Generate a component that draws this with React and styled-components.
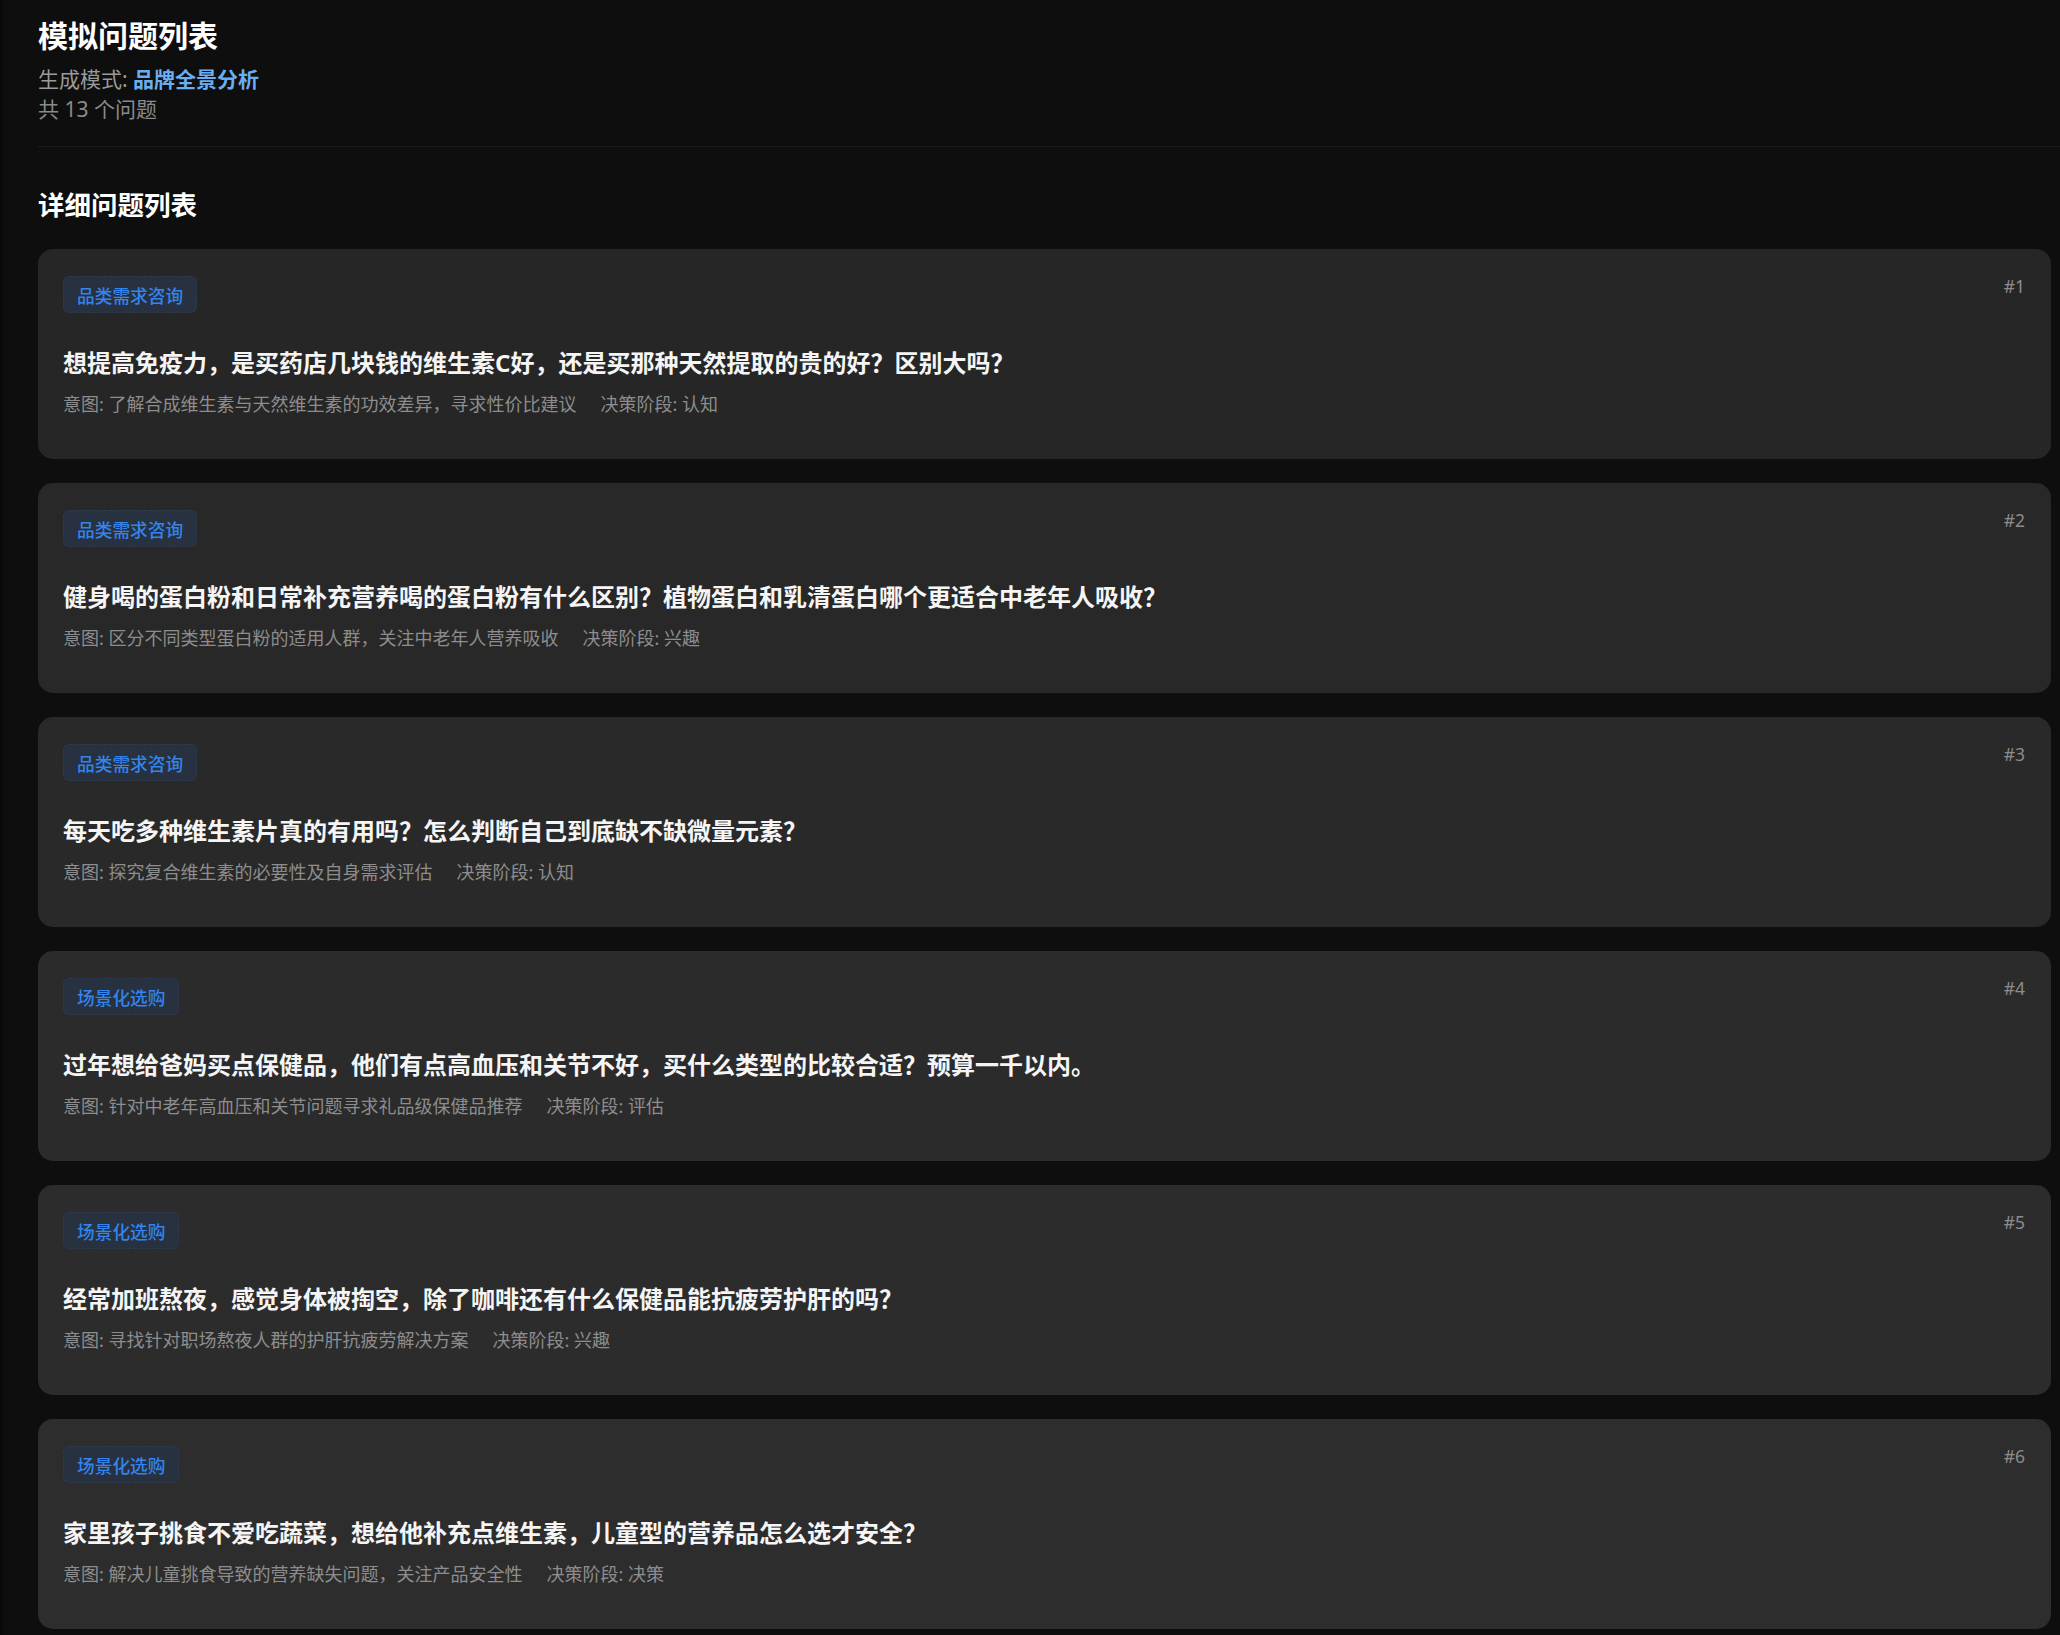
import React from "react";
import styled, { createGlobalStyle } from "styled-components";

const GlobalStyle = createGlobalStyle`
  html, body {
    margin: 0;
    padding: 0;
    background: #0e0e0e;
  }
  body {
    font-family: "Noto Sans", "Noto Sans CJK SC", sans-serif;
    color: #f2f2f2;
    -webkit-font-smoothing: antialiased;
  }
  * { box-sizing: border-box; }
`;

const Page = styled.div`
  min-height: 1635px;
  background: #0e0e0e;
  border-left: 3px solid #090909;
  padding: 0 9px 0 35px;
  overflow: hidden;
`;

const Header = styled.header`
  padding: 16px 0 22px;
  margin-right: -9px;
  border-bottom: 1px solid #1b1b1b;
  display: flex;
  flex-direction: column;
`;

const Title = styled.h1`
  margin: 0 0 9px;
  font-size: 30px;
  line-height: 39px;
  font-weight: 700;
  color: #ffffff;
`;

const Meta = styled.div`
  font-size: 21px;
  line-height: 30px;
  color: ${(p) => (p.$dim ? "#8a8a8a" : "#9a9a9a")};
`;

const Mode = styled.span`
  color: #6aaef2;
  font-weight: 700;
`;

const SectionTitle = styled.h2`
  margin: 41px 0 27px;
  font-size: 26.5px;
  line-height: 34px;
  font-weight: 700;
  color: #ffffff;
`;

const List = styled.div`
  display: flex;
  flex-direction: column;
  gap: 24px;
`;

const Card = styled.div`
  position: relative;
  height: 210px;
  border-radius: 15px;
  background: ${(p) => p.$bg};
  padding: 27px 25px 0;
  display: flex;
  flex-direction: column;
  align-items: flex-start;
`;

const Index = styled.span`
  position: absolute;
  top: 25px;
  right: 26px;
  font-size: 17.5px;
  line-height: 25px;
  color: #8c8c8c;
`;

const Badge = styled.span`
  display: inline-flex;
  align-items: center;
  height: 37px;
  padding: 0 13px;
  border-radius: 6px;
  background: #27313f;
  border: 1px dashed #2f3b4c;
  color: #3384ec;
  font-size: 17.7px;
  font-weight: 500;
`;

const Question = styled.div`
  margin-top: 33px;
  font-size: 24px;
  line-height: 34px;
  font-weight: 700;
  color: #f5f5f5;
`;

const InfoRow = styled.div`
  margin-top: 11px;
  display: flex;
  gap: 24px;
  font-size: 18px;
  line-height: 26px;
  color: #8d8d8d;
`;

const items = [
  {
    tag: "品类需求咨询",
    q: "想提高免疫力，是买药店几块钱的维生素C好，还是买那种天然提取的贵的好？区别大吗？",
    intent: "了解合成维生素与天然维生素的功效差异，寻求性价比建议",
    stage: "认知",
  },
  {
    tag: "品类需求咨询",
    q: "健身喝的蛋白粉和日常补充营养喝的蛋白粉有什么区别？植物蛋白和乳清蛋白哪个更适合中老年人吸收？",
    intent: "区分不同类型蛋白粉的适用人群，关注中老年人营养吸收",
    stage: "兴趣",
  },
  {
    tag: "品类需求咨询",
    q: "每天吃多种维生素片真的有用吗？怎么判断自己到底缺不缺微量元素？",
    intent: "探究复合维生素的必要性及自身需求评估",
    stage: "认知",
  },
  {
    tag: "场景化选购",
    q: "过年想给爸妈买点保健品，他们有点高血压和关节不好，买什么类型的比较合适？预算一千以内。",
    intent: "针对中老年高血压和关节问题寻求礼品级保健品推荐",
    stage: "评估",
  },
  {
    tag: "场景化选购",
    q: "经常加班熬夜，感觉身体被掏空，除了咖啡还有什么保健品能抗疲劳护肝的吗？",
    intent: "寻找针对职场熬夜人群的护肝抗疲劳解决方案",
    stage: "兴趣",
  },
  {
    tag: "场景化选购",
    q: "家里孩子挑食不爱吃蔬菜，想给他补充点维生素，儿童型的营养品怎么选才安全？",
    intent: "解决儿童挑食导致的营养缺失问题，关注产品安全性",
    stage: "决策",
  },
];

const cardBgs = ["#262626", "#282828", "#292929", "#2b2b2b", "#2c2c2c", "#2d2d2d"];

export default function App() {
  return (
    <>
      <GlobalStyle />
      <Page>
        <Header>
          <Title>模拟问题列表</Title>
          <Meta>
            生成模式: <Mode>品牌全景分析</Mode>
          </Meta>
          <Meta $dim>共 13 个问题</Meta>
        </Header>
        <SectionTitle>详细问题列表</SectionTitle>
        <List>
          {items.map((it, i) => (
            <Card key={i} $bg={cardBgs[i]}>
              <Index>#{i + 1}</Index>
              <Badge>{it.tag}</Badge>
              <Question>{it.q}</Question>
              <InfoRow>
                <span>意图: {it.intent}</span>
                <span>决策阶段: {it.stage}</span>
              </InfoRow>
            </Card>
          ))}
        </List>
      </Page>
    </>
  );
}
